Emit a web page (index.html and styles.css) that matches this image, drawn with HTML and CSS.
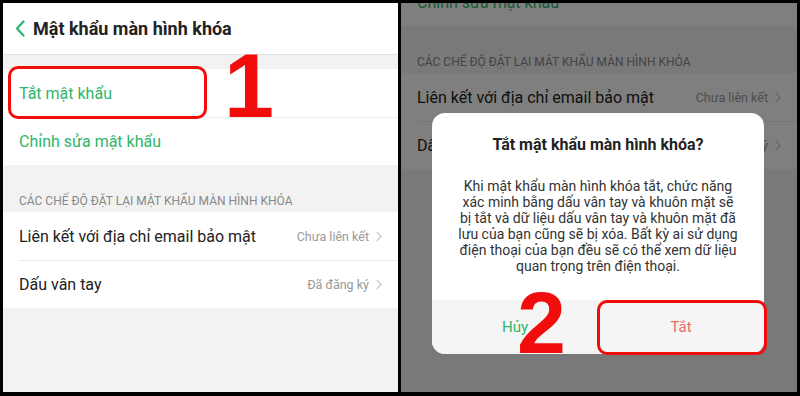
FILE: index.html
```html
<!DOCTYPE html>
<html lang="vi">
<head>
    <meta charset="UTF-8">
    <meta name="viewport" content="width=device-width, initial-scale=1.0">
    <title>Tắt mật khẩu màn hình khóa</title>
    <link rel="stylesheet" href="styles.css">
</head>
<body>
    <div class="frame">
        <!-- Step 1: settings screen -->
        <section class="phone phone-left">
            <header class="topbar">
                <svg class="back-icon" width="10" height="17" viewBox="0 0 10 17">
                    <polyline points="8.5,1.5 2,8.5 8.5,15.5" fill="none" stroke="#2db36a" stroke-width="2.2" stroke-linecap="round" stroke-linejoin="round"/>
                </svg>
                <h1 class="title">Mật khẩu màn hình khóa</h1>
            </header>

            <div class="group group-top">
                <div class="row row-green">Tắt mật khẩu</div>
                <div class="row row-green">Chỉnh sửa mật khẩu</div>
            </div>

            <div class="section-label">CÁC CHẾ ĐỘ ĐẶT LẠI MẬT KHẨU MÀN HÌNH KHÓA</div>

            <div class="group">
                <div class="row">
                    <span>Liên kết với địa chỉ email bảo mật</span>
                    <span class="row-value">Chưa liên kết
                        <svg width="6" height="11" viewBox="0 0 6 11"><polyline points="0.8,0.8 5.2,5.5 0.8,10.2" fill="none" stroke="#c4c4c4" stroke-width="1.1"/></svg>
                    </span>
                </div>
                <div class="row">
                    <span>Dấu vân tay</span>
                    <span class="row-value">Đã đăng ký
                        <svg width="6" height="11" viewBox="0 0 6 11"><polyline points="0.8,0.8 5.2,5.5 0.8,10.2" fill="none" stroke="#c4c4c4" stroke-width="1.1"/></svg>
                    </span>
                </div>
            </div>

            <span class="mark-box mark-box-1"></span>
            <span class="step step-1">1</span>
        </section>

        <!-- Step 2: confirm dialog -->
        <section class="phone phone-right">
            <div class="group">
                <div class="row row-green row-cut">Chỉnh sửa mật khẩu</div>
            </div>

            <div class="section-label">CÁC CHẾ ĐỘ ĐẶT LẠI MẬT KHẨU MÀN HÌNH KHÓA</div>

            <div class="group">
                <div class="row">
                    <span>Liên kết với địa chỉ email bảo mật</span>
                    <span class="row-value">Chưa liên kết
                        <svg width="6" height="11" viewBox="0 0 6 11"><polyline points="0.8,0.8 5.2,5.5 0.8,10.2" fill="none" stroke="#c4c4c4" stroke-width="1.1"/></svg>
                    </span>
                </div>
                <div class="row">
                    <span>Dấu vân tay</span>
                    <span class="row-value">Đã đăng ký
                        <svg width="6" height="11" viewBox="0 0 6 11"><polyline points="0.8,0.8 5.2,5.5 0.8,10.2" fill="none" stroke="#c4c4c4" stroke-width="1.1"/></svg>
                    </span>
                </div>
            </div>

            <div class="dim"></div>

            <div class="dialog">
                <h2 class="dialog-title">Tắt mật khẩu màn hình khóa?</h2>
                <p class="dialog-text">
                    Khi mật khẩu màn hình khóa tắt, chức năng<br>
                    xác minh bằng dấu vân tay và khuôn mặt sẽ<br>
                    bị tắt và dữ liệu dấu vân tay và khuôn mặt đã<br>
                    lưu của bạn cũng sẽ bị xóa. Bất kỳ ai sử dụng<br>
                    điện thoại của bạn đều sẽ có thể xem dữ liệu<br>
                    quan trọng trên điện thoại.
                </p>
                <div class="dialog-actions">
                    <button class="btn btn-cancel">Hủy</button>
                    <button class="btn btn-off">Tắt</button>
                </div>
            </div>

            <span class="mark-box mark-box-2"></span>
            <span class="step step-2">2</span>
        </section>
    </div>
</body>
</html>
```

FILE: styles.css
```css
* {
    margin: 0;
    padding: 0;
    box-sizing: border-box;
    font-family: Roboto, 'Noto Sans', sans-serif;
}

body {
    background: #000;
    width: 800px;
    height: 396px;
    overflow: hidden;
}

.frame {
    display: flex;
    gap: 3px;
    height: 396px;
    padding: 3px 3px 4px;
    background: #000;
}

.phone {
    position: relative;
    overflow: hidden;
    background: #f2f2f2;
}

.phone-left {
    width: 395px;
}

.phone-right {
    width: 396px;
}

.topbar {
    height: 52px;
    background: white;
    border-bottom: 1px solid #e4e4e4;
    display: flex;
    align-items: center;
    gap: 8px;
    padding-left: 12px;
}

.title {
    font-size: 18px;
    font-weight: 700;
    color: #222;
}

.group {
    background: white;
}

.group-top {
    margin-top: 14px;
}

.row {
    height: 48px;
    display: flex;
    align-items: center;
    justify-content: space-between;
    padding: 0 16px;
    font-size: 16px;
    color: #222;
}

.row + .row {
    height: 48px;
    margin-left: 16px;
    padding-left: 0;
    border-top: 1px solid #ececec;
}

.row-green {
    color: #2fb56c;
}

.row-cut {
    margin-top: -25px;
}

.row-value {
    display: flex;
    align-items: center;
    gap: 7px;
    font-size: 12.5px;
    color: #999;
}

.section-label {
    height: 47px;
    display: flex;
    align-items: flex-end;
    padding: 0 0 3px 16px;
    font-size: 12px;
    line-height: 16px;
    color: #888;
}

.dim {
    position: absolute;
    inset: 0;
    background: rgba(0,0,0,0.5);
}

.dialog {
    position: absolute;
    left: 31px;
    top: 110px;
    width: 332px;
    background: white;
    border-radius: 13px;
    overflow: hidden;
    text-align: center;
}

.dialog-title {
    margin-top: 22px;
    font-size: 16px;
    line-height: 20px;
    font-weight: 700;
    color: #222;
}

.dialog-text {
    margin-top: 23px;
    font-size: 14px;
    line-height: 16px;
    color: #333;
}

.dialog-actions {
    display: grid;
    grid-template-columns: 1fr 1fr;
    height: 54px;
    margin-top: 26px;
    background: #f5f5f5;
}

.btn {
    border: none;
    background: transparent;
    font-size: 15px;
    font-family: Roboto, 'Noto Sans', sans-serif;
}

.btn-cancel {
    color: #2fb56c;
}

.btn-off {
    color: #e86a6a;
}

/* tutorial annotations */
.mark-box {
    position: absolute;
    border: 3px solid #f20d0d;
    border-radius: 10px;
}

.mark-box-1 {
    left: 5px;
    top: 63px;
    width: 199px;
    height: 53px;
}

.mark-box-2 {
    left: 196px;
    top: 297px;
    width: 170px;
    height: 55px;
}

.step {
    position: absolute;
    font-family: 'Liberation Sans', Arial, sans-serif;
    font-weight: 700;
    line-height: 1;
    color: #f20d0d;
}

.step-1 {
    left: 221px;
    top: 38px;
    font-size: 90px;
}

.step-2 {
    left: 116px;
    top: 276px;
    font-size: 88px;
}
```
